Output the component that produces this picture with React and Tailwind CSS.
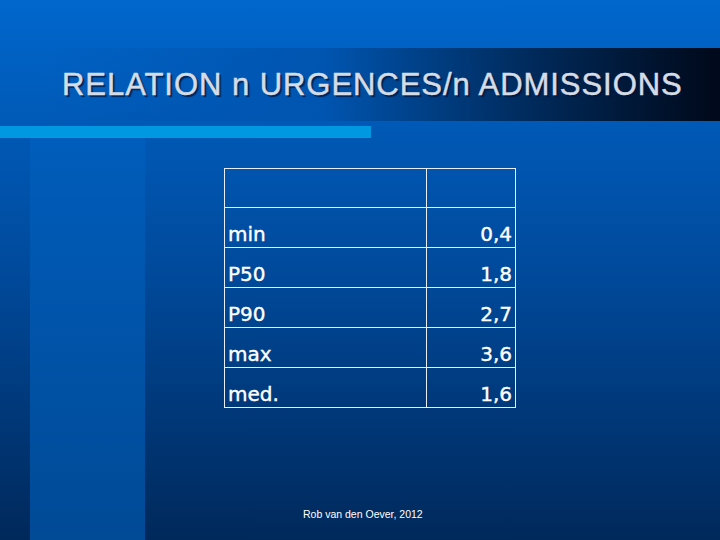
import React from 'react'

const rows = [
  { label: 'min', value: '0,4' },
  { label: 'P50', value: '1,8' },
  { label: 'P90', value: '2,7' },
  { label: 'max', value: '3,6' },
  { label: 'med.', value: '1,6' },
]

export default function App() {
  return (
    <div className="w-[720px] h-[540px] overflow-hidden flex flex-col bg-gradient-to-b from-[#0067cd] via-[#004a9c] to-[#00295b]">
      {/* title band */}
      <div className="mt-[48px] h-[73px] flex items-center bg-gradient-to-r from-[#0062c4]/0 via-[#0055b0] to-[#000a1c] from-[6%] via-[45%] to-[99%]">
        <h1
          className="ml-[62px] text-[31px] leading-none tracking-[0.95px] text-[#d5dce6] [-webkit-text-stroke:0.5px_#d5dce6] [text-shadow:2px_2px_1px_rgba(0,20,60,0.75)]"
          style={{ fontFamily: '"Liberation Sans", Arial, sans-serif' }}
        >
          RELATION n URGENCES/n ADMISSIONS
        </h1>
      </div>

      <div className="mt-[5px] h-[12px] w-[371px] bg-[#0098e0]" />

      {/* body */}
      <div className="flex-1 flex">
        <div className="w-[30px]" />
        <div className="w-[115px] bg-gradient-to-b from-[#005dbb] to-[#004a96]" />
        <div className="flex-1 flex flex-col">
          <table
            className="mt-[30px] ml-[79px] w-[292px] border-collapse text-white text-[20px] [-webkit-text-stroke:0.4px_white]"
            style={{ fontFamily: '"DejaVu Sans", Verdana, sans-serif' }}
          >
            <tbody>
              <tr className="h-[39px]">
                <td className="border-[1.5px] border-[#e8eef6] w-[202px]" />
                <td className="border-[1.5px] border-[#e8eef6]" />
              </tr>
              {rows.map((r) => (
                <tr key={r.label} className="h-[40px]">
                  <td className="border-[1.5px] border-[#e8eef6] pl-[3px] pt-[13px] leading-none">{r.label}</td>
                  <td className="border-[1.5px] border-[#e8eef6] pr-[3px] pt-[13px] text-right leading-none">{r.value}</td>
                </tr>
              ))}
            </tbody>
          </table>
          <div className="flex-1" />
          <p
            className="mb-[21px] ml-[158px] text-[10.5px] leading-none text-white"
            style={{ fontFamily: '"Liberation Sans", Arial, sans-serif' }}
          >
            Rob van den Oever, 2012
          </p>
        </div>
      </div>
    </div>
  )
}
